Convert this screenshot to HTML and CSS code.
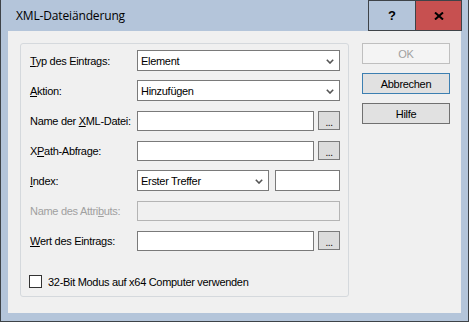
FILE: index.html
```html
<!DOCTYPE html>
<html>
<head>
<meta charset="utf-8">
<link rel="stylesheet" href="styles.css">
</head>
<body>
<div class="window">
  <div class="titlebar">
    <span class="title">XML-Dateiänderung</span>
    <div class="caption-buttons">
      <div class="cap help">?</div>
      <div class="cap close">
        <svg width="10" height="8" viewBox="0 0 10 8"><path d="M1 0.5 L9 7.5 M9 0.5 L1 7.5" stroke="#000" stroke-width="2" fill="none"/></svg>
      </div>
    </div>
  </div>
  <div class="client">
    <div class="group">
      <div class="form">
        <span class="lbl"><u>T</u>yp des Eintrags:</span>
        <div class="combo"><span>Element</span><svg class="chev" width="8" height="5" viewBox="0 0 8 5"><path d="M0.8 0.8 L4 4 L7.2 0.8" stroke="#555" stroke-width="1.6" fill="none"/></svg></div>

        <span class="lbl"><u>A</u>ktion:</span>
        <div class="combo"><span>Hinzufügen</span><svg class="chev" width="8" height="5" viewBox="0 0 8 5"><path d="M0.8 0.8 L4 4 L7.2 0.8" stroke="#555" stroke-width="1.6" fill="none"/></svg></div>

        <span class="lbl">Name der <u>X</u>ML-Datei:</span>
        <div class="pair"><div class="edit grow"></div><div class="browse">...</div></div>

        <span class="lbl">X<u>P</u>ath-Abfrage:</span>
        <div class="pair"><div class="edit grow"></div><div class="browse">...</div></div>

        <span class="lbl"><u>I</u>ndex:</span>
        <div class="pair wide"><div class="combo small"><span>Erster Treffer</span><svg class="chev" width="8" height="5" viewBox="0 0 8 5"><path d="M0.8 0.8 L4 4 L7.2 0.8" stroke="#555" stroke-width="1.6" fill="none"/></svg></div><div class="edit grow"></div></div>

        <span class="lbl disabled">Name des Attri<u>b</u>uts:</span>
        <div class="edit off"></div>

        <span class="lbl"><u>W</u>ert des Eintrags:</span>
        <div class="pair"><div class="edit grow"></div><div class="browse">...</div></div>
      </div>
      <div class="check"><span class="box"></span><span>32-Bit Modus auf x64 Computer verwenden</span></div>
    </div>
    <div class="buttons">
      <div class="btn off">OK</div>
      <div class="btn default">Abbrechen</div>
      <div class="btn">Hilfe</div>
    </div>
  </div>
</div>
</body>
</html>
```

FILE: styles.css
```css
* { box-sizing: border-box; }
html, body { margin: 0; padding: 0; }
body { width: 469px; height: 322px; overflow: hidden; background: #b4c5da; }

.window {
  width: 469px;
  height: 322px;
  background: #b4c5da;
  border: 1px solid #3e4348;
  border-top: none;
  padding: 0 6px 8px 7px;
  display: flex;
  flex-direction: column;
}

.titlebar {
  height: 31px;
  display: flex;
  align-items: flex-start;
}
.title {
  font-family: "Open Sans", "Liberation Sans", sans-serif;
  font-size: 12px;
  letter-spacing: -0.15px;
  color: #000;
  margin-left: 8px;
  margin-top: 7px;
  flex: 1;
}
.caption-buttons { display: flex; }
.cap {
  height: 31px;
  width: 47px;
  border: 1px solid #3e4348;
  display: flex;
  align-items: center;
  justify-content: center;
}
.help {
  border-right: none;
  font-family: "Liberation Sans", sans-serif;
  font-weight: bold;
  font-size: 13px;
  color: #000;
}
.close { background: #c75050; }

.client {
  flex: 1;
  margin-right: 1px;
  background: #f0f0f0;
  display: flex;
  align-items: flex-start;
  padding: 12px 11px 0 12px;
  gap: 13px;
  font-family: "Liberation Sans", Arial, sans-serif;
  font-size: 11px;
  letter-spacing: -0.3px;
  color: #000;
}

.group {
  width: 329px;
  height: 254px;
  border: 1px solid #d5d9dd;
  border-radius: 3px;
  padding: 6px 8px 0 9px;
}

.form {
  display: grid;
  grid-template-columns: 107px 1fr;
  grid-auto-rows: 21px;
  row-gap: 9px;
  align-items: center;
}
.lbl { white-space: nowrap; }
.lbl.disabled { color: #a0a0a0; }
u { text-decoration: underline; text-underline-offset: 1px; }

.combo {
  height: 21px;
  border: 1px solid #7a7a7a;
  background: #fff;
  display: flex;
  align-items: center;
  justify-content: space-between;
  padding: 0 5px 0 3px;
}
.combo .chev { margin-top: 1px; }
.combo.small { width: 132px; flex: none; }

.pair {
  display: flex;
  align-items: center;
  gap: 4px;
  height: 21px;
}
.pair.wide { gap: 6px; }
.edit {
  height: 20px;
  border: 1px solid #7a7a7a;
  background: #fff;
}
.edit.grow { flex: 1; }
.combo.small + .edit { height: 21px; }
.edit.off {
  background: #f0f0f0;
  border-color: #b4b4b4;
}
.browse {
  width: 22px;
  height: 19px;
  border: 1px solid #7a7a7a;
  background: #dcdcdc;
  font-size: 10px;
  line-height: 14px;
  text-align: center;
  color: #000;
  letter-spacing: -0.5px;
  padding-top: 4px;
}

.check {
  display: flex;
  align-items: center;
  gap: 6px;
  margin-top: 24px;
  margin-left: -1px;
}
.check .box {
  width: 13px;
  height: 13px;
  border: 1px solid #333;
  background: #fff;
}

.buttons {
  display: flex;
  flex-direction: column;
  gap: 9px;
  width: 88px;
}
.btn {
  height: 21px;
  border: 1px solid #707070;
  background: #e1e1e1;
  display: flex;
  align-items: center;
  justify-content: center;
}
.btn.off {
  border-color: #bfbfbf;
  background: #f4f4f4;
  color: #a0a0a0;
}
.btn.default {
  border-color: #3c7fb1;
}
```
